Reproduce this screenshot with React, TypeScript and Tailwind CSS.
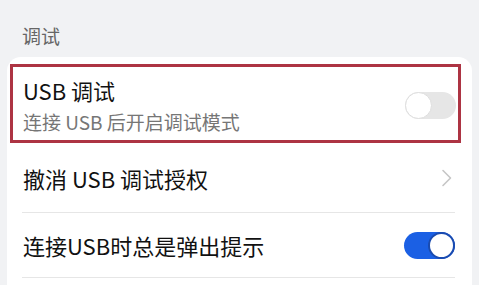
import React from 'react';

const Toggle: React.FC<{ on: boolean }> = ({ on }) => {
  if (on) {
    return (
      <div className="relative h-[27px] w-[51px] shrink-0 rounded-full bg-[#1b60e4]">
        <div className="absolute right-0 top-0 h-[27px] w-[27px] rounded-full border-[2px] border-[#1a4bb0] bg-white" />
      </div>
    );
  }
  return (
    <div className="relative h-[27px] w-[51px] shrink-0 rounded-full bg-[#e6e6e6]">
      <div className="absolute left-0 top-0 h-[27px] w-[27px] rounded-full border border-[#dedede] bg-white" />
    </div>
  );
};

const Chevron = () => (
  <svg width="12" height="18" viewBox="0 0 12 18" fill="none" className="shrink-0">
    <path d="M2 1.5 L9.5 9 L2 16.5" stroke="#c6c6c6" strokeWidth="1.6" strokeLinecap="round" strokeLinejoin="round" />
  </svg>
);

export default function App() {
  return (
    <div
      className="h-[285px] w-[479px] overflow-hidden bg-[#f1f2f4]"
      style={{ fontFamily: '"Noto Sans CJK SC", "Noto Sans", sans-serif' }}
    >
      <div className="h-[57px] pl-[22px] pt-[24px] text-[19px] leading-[24px] text-[#666666]">调试</div>

      <div className="ml-[7px] h-[228px] w-[465px] rounded-t-[14px] bg-white pt-[7px]">
        {/* highlighted row */}
        <div className="ml-[3px] flex h-[79px] w-[451px] items-start justify-between border-[3px] border-[#ad3443] pl-[10px] pr-[2px]">
          <div className="pt-[9px]">
            <div className="text-[22px] leading-[28px] text-[#111111]">USB 调试</div>
            <div className="mt-[5px] text-[19px] leading-[26px] text-[#767676]">连接 USB 后开启调试模式</div>
          </div>
          <div className="mt-[25px]">
            <Toggle on={false} />
          </div>
        </div>

        <div className="pl-[15px] pr-[17px]">
          <div className="flex h-[70px] items-center justify-between border-b border-[#e6e6e6] pr-[2px]">
            <span className="pl-[1px] text-[22px] leading-[28px] text-[#111111]">撤消 USB 调试授权</span>
            <Chevron />
          </div>
          <div className="flex h-[65px] items-center justify-between border-b border-[#e6e6e6]">
            <span className="pl-[1px] text-[22px] leading-[28px] text-[#111111]">连接USB时总是弹出提示</span>
            <Toggle on={true} />
          </div>
        </div>
      </div>
    </div>
  );
}
